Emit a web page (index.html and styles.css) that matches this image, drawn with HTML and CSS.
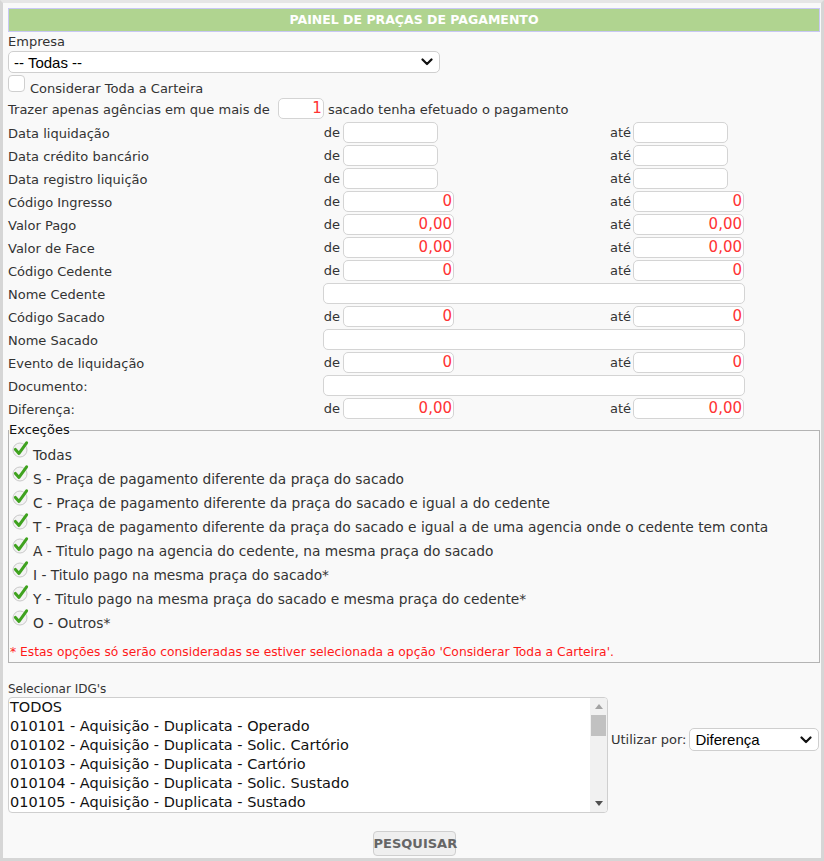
FILE: index.html
```html
<!DOCTYPE html>
<html lang="pt">
<head>
<meta charset="utf-8">
<title>Painel de Praças de Pagamento</title>
<link rel="stylesheet" href="styles.css">
</head>
<body>
<div class="panel">
  <div class="title">PAINEL DE PRAÇAS DE PAGAMENTO</div>

  <div class="field-label">Empresa</div>
  <div class="fake-select empresa">
    <span>-- Todas --</span>
    <svg class="chev" width="12" height="8" viewBox="0 0 12 8"><path d="M1.5 1.5 L6 6 L10.5 1.5" fill="none" stroke="#111" stroke-width="2.2" stroke-linecap="round" stroke-linejoin="round"/></svg>
  </div>

  <div class="check-row">
    <span class="checkbox"></span>
    <span class="check-text">Considerar Toda a Carteira</span>
  </div>

  <div class="inline-row">
    <span class="txt">Trazer apenas agências em que mais de</span>
    <span class="inp tiny num">1</span>
    <span class="txt">sacado tenha efetuado o pagamento</span>
  </div>

  <div class="grid">
    <span class="lbl">Data liquidação</span><span class="de">de</span><span class="cell"><span class="inp date"></span></span><span class="ate">até</span><span class="cell"><span class="inp date"></span></span>
    <span class="lbl">Data crédito bancário</span><span class="de">de</span><span class="cell"><span class="inp date"></span></span><span class="ate">até</span><span class="cell"><span class="inp date"></span></span>
    <span class="lbl">Data registro liquição</span><span class="de">de</span><span class="cell"><span class="inp date"></span></span><span class="ate">até</span><span class="cell"><span class="inp date"></span></span>
    <span class="lbl">Código Ingresso</span><span class="de">de</span><span class="cell"><span class="inp numw num">0</span></span><span class="ate">até</span><span class="cell"><span class="inp numw num">0</span></span>
    <span class="lbl">Valor Pago</span><span class="de">de</span><span class="cell"><span class="inp numw num">0,00</span></span><span class="ate">até</span><span class="cell"><span class="inp numw num">0,00</span></span>
    <span class="lbl">Valor de Face</span><span class="de">de</span><span class="cell"><span class="inp numw num">0,00</span></span><span class="ate">até</span><span class="cell"><span class="inp numw num">0,00</span></span>
    <span class="lbl">Código Cedente</span><span class="de">de</span><span class="cell"><span class="inp numw num">0</span></span><span class="ate">até</span><span class="cell"><span class="inp numw num">0</span></span>
    <span class="lbl">Nome Cedente</span><span class="full"><span class="inp fullw"></span></span>
    <span class="lbl">Código Sacado</span><span class="de">de</span><span class="cell"><span class="inp numw num">0</span></span><span class="ate">até</span><span class="cell"><span class="inp numw num">0</span></span>
    <span class="lbl">Nome Sacado</span><span class="full"><span class="inp fullw"></span></span>
    <span class="lbl">Evento de liquidação</span><span class="de">de</span><span class="cell"><span class="inp numw num">0</span></span><span class="ate">até</span><span class="cell"><span class="inp numw num">0</span></span>
    <span class="lbl">Documento:</span><span class="full"><span class="inp fullw"></span></span>
    <span class="lbl">Diferença:</span><span class="de">de</span><span class="cell"><span class="inp numw num">0,00</span></span><span class="ate">até</span><span class="cell"><span class="inp numw num">0,00</span></span>
  </div>

  <fieldset class="excecoes">
    <legend>Exceções</legend>
    <div class="opt"><svg class="tick" width="18" height="18" viewBox="0 0 18 18"><circle cx="8" cy="10" r="7" fill="#f3f3f3" stroke="#c9c9c9" stroke-width="1"/><path d="M3.4 9.4 L7 13.4 L14.6 2.8" fill="none" stroke="#3fa21f" stroke-width="3" stroke-linecap="round" stroke-linejoin="round"/></svg><span>Todas</span></div>
    <div class="opt"><svg class="tick" width="18" height="18" viewBox="0 0 18 18"><circle cx="8" cy="10" r="7" fill="#f3f3f3" stroke="#c9c9c9" stroke-width="1"/><path d="M3.4 9.4 L7 13.4 L14.6 2.8" fill="none" stroke="#3fa21f" stroke-width="3" stroke-linecap="round" stroke-linejoin="round"/></svg><span>S - Praça de pagamento diferente da praça do sacado</span></div>
    <div class="opt"><svg class="tick" width="18" height="18" viewBox="0 0 18 18"><circle cx="8" cy="10" r="7" fill="#f3f3f3" stroke="#c9c9c9" stroke-width="1"/><path d="M3.4 9.4 L7 13.4 L14.6 2.8" fill="none" stroke="#3fa21f" stroke-width="3" stroke-linecap="round" stroke-linejoin="round"/></svg><span>C - Praça de pagamento diferente da praça do sacado e igual a do cedente</span></div>
    <div class="opt"><svg class="tick" width="18" height="18" viewBox="0 0 18 18"><circle cx="8" cy="10" r="7" fill="#f3f3f3" stroke="#c9c9c9" stroke-width="1"/><path d="M3.4 9.4 L7 13.4 L14.6 2.8" fill="none" stroke="#3fa21f" stroke-width="3" stroke-linecap="round" stroke-linejoin="round"/></svg><span>T - Praça de pagamento diferente da praça do sacado e igual a de uma agencia onde o cedente tem conta</span></div>
    <div class="opt"><svg class="tick" width="18" height="18" viewBox="0 0 18 18"><circle cx="8" cy="10" r="7" fill="#f3f3f3" stroke="#c9c9c9" stroke-width="1"/><path d="M3.4 9.4 L7 13.4 L14.6 2.8" fill="none" stroke="#3fa21f" stroke-width="3" stroke-linecap="round" stroke-linejoin="round"/></svg><span>A - Titulo pago na agencia do cedente, na mesma praça do sacado</span></div>
    <div class="opt"><svg class="tick" width="18" height="18" viewBox="0 0 18 18"><circle cx="8" cy="10" r="7" fill="#f3f3f3" stroke="#c9c9c9" stroke-width="1"/><path d="M3.4 9.4 L7 13.4 L14.6 2.8" fill="none" stroke="#3fa21f" stroke-width="3" stroke-linecap="round" stroke-linejoin="round"/></svg><span>I - Titulo pago na mesma praça do sacado*</span></div>
    <div class="opt"><svg class="tick" width="18" height="18" viewBox="0 0 18 18"><circle cx="8" cy="10" r="7" fill="#f3f3f3" stroke="#c9c9c9" stroke-width="1"/><path d="M3.4 9.4 L7 13.4 L14.6 2.8" fill="none" stroke="#3fa21f" stroke-width="3" stroke-linecap="round" stroke-linejoin="round"/></svg><span>Y - Titulo pago na mesma praça do sacado e mesma praça do cedente*</span></div>
    <div class="opt"><svg class="tick" width="18" height="18" viewBox="0 0 18 18"><circle cx="8" cy="10" r="7" fill="#f3f3f3" stroke="#c9c9c9" stroke-width="1"/><path d="M3.4 9.4 L7 13.4 L14.6 2.8" fill="none" stroke="#3fa21f" stroke-width="3" stroke-linecap="round" stroke-linejoin="round"/></svg><span>O - Outros*</span></div>
    <p class="note">* Estas opções só serão consideradas se estiver selecionada a opção 'Considerar Toda a Carteira'.</p>
  </fieldset>

  <div class="idg-label">Selecionar IDG's</div>
  <div class="idg-row">
    <div class="listbox">
      <div class="items">
        <div>TODOS</div>
        <div>010101 - Aquisição - Duplicata - Operado</div>
        <div>010102 - Aquisição - Duplicata - Solic. Cartório</div>
        <div>010103 - Aquisição - Duplicata - Cartório</div>
        <div>010104 - Aquisição - Duplicata - Solic. Sustado</div>
        <div>010105 - Aquisição - Duplicata - Sustado</div>
      </div>
      <div class="scrollbar">
        <span class="arrow up"></span>
        <span class="thumb"></span>
        <span class="track"></span>
        <span class="arrow down"></span>
      </div>
    </div>
    <span class="util-label">Utilizar por:</span>
    <div class="fake-select util">
      <span>Diferença</span>
      <svg class="chev" width="12" height="8" viewBox="0 0 12 8"><path d="M1.5 1.5 L6 6 L10.5 1.5" fill="none" stroke="#111" stroke-width="2.2" stroke-linecap="round" stroke-linejoin="round"/></svg>
    </div>
  </div>

  <div class="actions">
    <button class="btn" type="button">PESQUISAR</button>
  </div>
</div>
</body>
</html>
```
FILE: styles.css
```css
* { box-sizing: border-box; }
html, body { margin: 0; padding: 0; }
body {
  background: #e8e8e8;
  font-family: "DejaVu Sans", sans-serif;
  font-size: 13px;
  color: #333;
}
.panel {
  width: 824px;
  height: 861px;
  background: #f9f9f9;
  border: 3px solid #d6d6d6;
  border-top-color: #e6e6e6;
  padding: 5px 1px 0 5px;
}
.title {
  height: 24px;
  background: #b0d490;
  border: 1px solid #c8c8f4;
  color: #fff;
  font-weight: bold;
  font-size: 12.5px;
  line-height: 22px;
  text-align: center;
}
.field-label {
  line-height: 19px;
}
.fake-select {
  display: flex;
  align-items: center;
  justify-content: space-between;
  height: 22px;
  background: #fff;
  border: 1px solid #cfcfcf;
  border-radius: 5px;
  padding: 0 6px 0 5px;
  font-family: "Liberation Sans", Arial, sans-serif;
  font-size: 15px;
  color: #000;
}
.empresa { width: 432px; }
.check-row {
  display: flex;
  align-items: flex-start;
  height: 24px;
  padding-top: 2px;
}
.checkbox {
  width: 17px;
  height: 17px;
  background: #fff;
  border: 1px solid #cfcfcf;
  border-radius: 4px;
  margin-right: 5px;
}
.check-text { line-height: 16px; margin-top: 6px; }
.inline-row {
  display: flex;
  align-items: center;
  height: 23px;
  gap: 4px;
}
.inline-row .txt { padding-top: 2px; }
.inline-row .txt:first-child { margin-right: 4px; }
.inp {
  display: block;
  height: 21px;
  background: #fff;
  border: 1px solid #d4d4d4;
  border-radius: 5px;
  font-size: 15px;
  line-height: 19px;
  padding: 0 1px;
}
.num { color: #ff3333; text-align: right; }
.tiny { width: 46px; }
.date { width: 95px; }
.numw { width: 111px; }
.fullw { width: 422px; }
.grid {
  display: grid;
  grid-template-columns: 315px 20px 267px 23px 112px;
  grid-auto-rows: 23px;
  align-items: center;
  margin-top: 1px;
}
.lbl { padding-top: 1px; }
.de, .ate { text-align: right; padding-right: 3px; }
.ate { padding-right: 4px; }
.full { grid-column: 2 / 6; }
.excecoes {
  margin: 3px 0 0 0;
  width: 812px;
  height: 240px;
  border: 1px solid #b4b4b4;
  padding: 0;
}
.excecoes legend {
  padding: 0;
  margin-left: 0;
  color: #111;
  line-height: 14px;
}
.opt {
  display: flex;
  align-items: flex-start;
  height: 24px;
  padding-left: 3px;
  font-size: 13.75px;
}
.tick { margin-right: 3px; flex: none; }
.opt span { line-height: 16px; margin-top: 7px; }
.opt:first-of-type { margin-top: 3px; }
.note {
  margin: 13px 0 0 1px;
  color: #ff1a1a;
  font-size: 12.3px;
}
.idg-label {
  margin-top: 18px;
  font-size: 12px;
  line-height: 16px;
}
.idg-row {
  display: flex;
  align-items: flex-start;
}
.listbox {
  display: flex;
  width: 600px;
  height: 116px;
  background: #fff;
  border: 1px solid #cfcfcf;
  border-radius: 4px;
  overflow: hidden;
  flex: none;
}
.items {
  flex: 1;
  padding: 0 0 0 1px;
  font-size: 14.5px;
  line-height: 19px;
  color: #111;
}
.scrollbar {
  width: 17px;
  background: #f1f1f1;
  display: flex;
  flex-direction: column;
  align-items: center;
}
.arrow {
  width: 0; height: 0;
  border-left: 4px solid transparent;
  border-right: 4px solid transparent;
  margin: 6px 0;
}
.arrow.up { border-bottom: 5px solid #a3a3a3; }
.arrow.down { border-top: 5px solid #505050; }
.thumb { width: 15px; height: 21px; background: #c1c1c1; }
.track { flex: 1; }
.util-label {
  margin: 35px 3px 0 3px;
  font-size: 13px;
  white-space: nowrap;
  flex: none;
}
.util { width: 130px; height: 23px; margin-top: 31px; flex: none; }
.actions {
  display: flex;
  justify-content: center;
  margin-top: 18px;
}
.btn {
  height: 25px;
  width: 83px;
  background: #efefef;
  border: 1px solid #cfcfcf;
  border-radius: 4px;
  font-family: "DejaVu Sans", sans-serif;
  font-size: 13px;
  font-weight: bold;
  color: #666;
  padding: 0;
}
```
